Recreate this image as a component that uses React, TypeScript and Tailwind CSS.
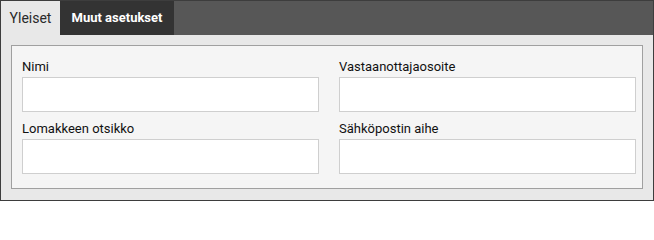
const fields = [
  { label: 'Nimi' },
  { label: 'Vastaanottajaosoite' },
  { label: 'Lomakkeen otsikko' },
  { label: 'Sähköpostin aihe' },
];

export default function App() {
  return (
    <div
      className="w-[654px] h-[201px] bg-[#555] border border-[#3d3d3d] flex flex-col text-[13px] text-[#111]"
      style={{ fontFamily: 'Roboto, "Liberation Sans", sans-serif' }}
    >
      {/* Tabs */}
      <div className="flex h-[34px] shrink-0 bg-[#575757]">
        <div className="w-[59px] bg-[#e8e8e8] text-[#2a2a2a] text-[14px] flex items-center justify-center">Yleiset</div>
        <div className="w-[114px] bg-[#333] text-white font-bold flex items-center justify-center">Muut asetukset</div>
      </div>

      {/* Panel */}
      <div className="flex-1 bg-[#e8e8e8] pt-[10px] pl-[10px] pr-[10px] pb-[10px]">
        <div className="h-[144px] border border-[#a0a0a0] bg-[#f5f5f5] pl-[10px] pr-[6px] pt-[12px] grid grid-cols-2 gap-x-[20px] gap-y-[8px] content-start">
          {fields.map(f => (
            <div key={f.label} className="flex flex-col">
              <label className="leading-[18px] mb-[1px]">{f.label}</label>
              <input className="h-[35px] bg-white border border-[#cfcfcf] outline-none" />
            </div>
          ))}
        </div>
      </div>
    </div>
  );
}
